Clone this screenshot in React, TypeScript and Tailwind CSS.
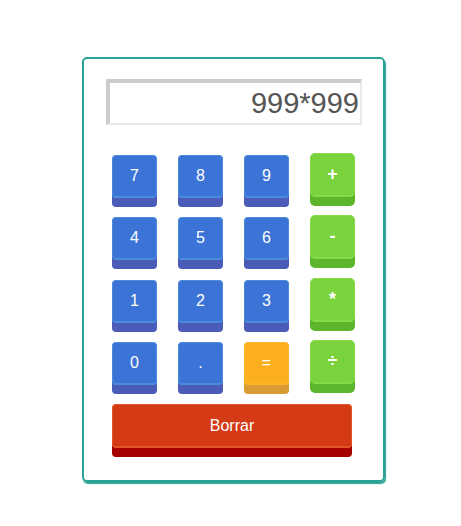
const digits = ["7", "8", "9", "+", "4", "5", "6", "-", "1", "2", "3", "*", "0", ".", "=", "÷"]

const ops = ["+", "-", "*", "÷"]

function Key({ label }: { label: string }) {
  if (ops.includes(label)) {
    return (
      <button className="-mt-[2px] flex h-[44px] w-[45px] items-center justify-center rounded-[5px] border border-b-2 border-[#86dc47] bg-[#7ad33c] text-[18px] font-bold text-white shadow-[0_9px_0_#5cb52b]">
        {label}
      </button>
    )
  }
  if (label === "=") {
    return (
      <button className="flex h-[43px] w-[45px] items-center justify-center rounded-[4px] border border-b-2 border-[#fdb52a] bg-[#fdb01e] text-[16px] text-white shadow-[0_9px_0_#d89b35]">
        {label}
      </button>
    )
  }
  return (
    <button className="flex h-[43px] w-[45px] items-center justify-center rounded-[4px] border border-b-2 border-[#4a8bdc] bg-[#3c73d6] text-[16px] text-white shadow-[0_9px_0_#4b5bb8]">
      {label}
    </button>
  )
}

export default function App() {
  return (
    <div className="min-h-screen bg-white font-['Liberation_Sans',Arial,sans-serif]">
      <div className="ml-[82px] pt-[57px]">
        <div className="flex h-[425px] w-[303px] flex-col rounded-[5px] border-2 border-[#2aa397] pl-[22px] pt-[20px] shadow-[1px_2px_1px_#2aa397]">
          <div className="flex h-[46px] w-[256px] items-center justify-end border-t-4 border-l-4 border-r-2 border-b-2 border-t-[#cccccc] border-l-[#cccccc] border-r-[#e8e8e8] border-b-[#e8e8e8] bg-white pr-[1px] text-[29px] leading-none text-[#555555]">
            999*999
          </div>
          <div className="ml-[6px] mt-[30px] grid grid-cols-[repeat(4,45px)] gap-x-[21px] gap-y-[19.4px]">
            {digits.map((d) => (
              <Key key={d} label={d} />
            ))}
          </div>
          <button className="ml-[6px] mt-[19px] flex h-[44px] w-[240px] items-center justify-center rounded-[4px] border border-b-2 border-[#df5628] bg-[#d33a15] text-[16px] text-white shadow-[0_9px_0_#a60101]">
            Borrar
          </button>
        </div>
      </div>
    </div>
  )
}
